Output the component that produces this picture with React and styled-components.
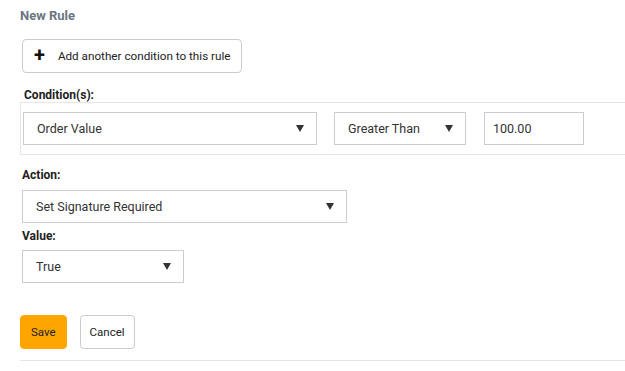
import React from "react";
import styled, { createGlobalStyle } from "styled-components";

const GlobalStyle = createGlobalStyle`
  body {
    margin: 0;
    background: #fff;
    font-family: "Roboto", "Liberation Sans", sans-serif;
    color: #333;
  }
`;

const Page = styled.div`
  padding: 8px 0 0 20px;
  width: 605px;
`;

const Title = styled.h3`
  margin: 0;
  font-size: 13px;
  font-weight: 700;
  color: #6b7682;
  line-height: 16px;
`;

const AddButton = styled.button`
  display: flex;
  align-items: center;
  gap: 13px;
  margin: 15px 0 0 2px;
  height: 34px;
  padding: 0 10px 0 11px;
  border: 1px solid #ccc;
  border-radius: 4px;
  background: #fff;
  font-family: inherit;
  font-size: 11.7px;
  color: #222;
`;

const Plus = styled.span`
  font-size: 20px;
  font-weight: 700;
  line-height: 1;
  color: #111;
  margin-top: -3px;
`;

const Label = styled.div`
  font-size: 12px;
  font-weight: 700;
  color: #222;
  line-height: 14px;
  margin: ${(p) => p.$mt || 0}px 0 0 ${(p) => p.$ml || 0}px;
`;

const ConditionBox = styled.div`
  display: flex;
  align-items: center;
  border: 1px solid #e6e6e6;
  border-right: none;
  padding: 9px 0 9px 2px;
  margin-right: -20px;
`;

const Select = styled.div`
  display: flex;
  align-items: center;
  justify-content: space-between;
  box-sizing: border-box;
  width: ${(p) => p.$w}px;
  height: 33px;
  margin-left: ${(p) => p.$ml || 0}px;
  padding: 0 12px 0 13px;
  border: 1px solid #ccc;
  background: #fff;
  font-size: 12.5px;
  color: #333;
`;

const Caret = styled.span`
  width: 0;
  height: 0;
  border-left: 4px solid transparent;
  border-right: 4px solid transparent;
  border-top: 7px solid #333;
`;

const Input = styled.div`
  display: flex;
  align-items: center;
  box-sizing: border-box;
  width: 100px;
  height: 33px;
  margin-left: 18px;
  padding-left: 8px;
  border: 1px solid #ccc;
  font-size: 12.5px;
  color: #333;
`;

const Field = styled.div`
  margin-top: ${(p) => p.$mt || 0}px;
  margin-left: ${(p) => p.$ml || 0}px;
`;

const Actions = styled.div`
  display: flex;
  gap: 13px;
  margin-top: 32px;
  padding-bottom: 11px;
  border-bottom: 1px solid #e6e6e6;
  margin-right: -20px;
`;

const Button = styled.button`
  height: 34px;
  padding: 0 ${(p) => (p.$primary ? 10 : 9)}px;
  border-radius: 4px;
  border: 1px solid ${(p) => (p.$primary ? "#ffa500" : "#ccc")};
  background: ${(p) => (p.$primary ? "#ffa500" : "#fff")};
  font-family: inherit;
  font-size: 11.5px;
  color: #222;
`;

export default function App() {
  return (
    <>
      <GlobalStyle />
      <Page>
        <Title>New Rule</Title>
        <AddButton>
          <Plus>+</Plus>
          Add another condition to this rule
        </AddButton>
        <Label $mt={15} $ml={4}>Condition(s):</Label>
        <ConditionBox>
          <Select $w={294}>
            Order Value
            <Caret />
          </Select>
          <Select $w={132} $ml={17}>
            Greater Than
            <Caret />
          </Select>
          <Input>100.00</Input>
        </ConditionBox>
        <Field $mt={13} $ml={2}>
          <Label>Action:</Label>
          <Field $mt={8}>
            <Select $w={325}>
              Set Signature Required
              <Caret />
            </Select>
          </Field>
        </Field>
        <Field $mt={6} $ml={2}>
          <Label>Value:</Label>
          <Field $mt={7}>
            <Select $w={162}>
              True
              <Caret />
            </Select>
          </Field>
        </Field>
        <Actions>
          <Button $primary>Save</Button>
          <Button>Cancel</Button>
        </Actions>
      </Page>
    </>
  );
}
